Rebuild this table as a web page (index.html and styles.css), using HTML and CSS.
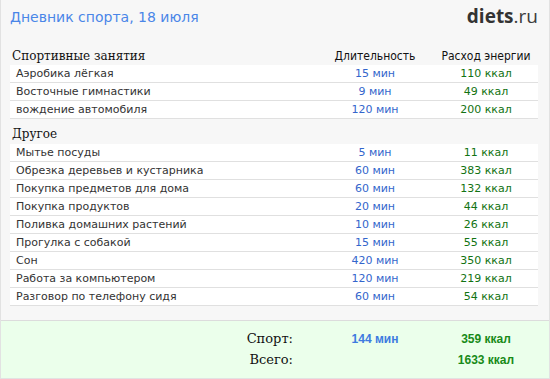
FILE: index.html
```html
<!DOCTYPE html>
<html lang="ru">
<head>
<meta charset="utf-8">
<title>Дневник спорта</title>
<link rel="stylesheet" href="styles.css">
</head>
<body>
<div class="panel">
  <div class="top">
    <div class="title">Дневник спорта, 18 июля</div>
    <div class="logo"><b>diets</b>.ru</div>
  </div>
  <div class="content">
    <div class="grid head">
      <div class="sec">Спортивные занятия</div>
      <div class="colh">Длительность</div>
      <div class="colh">Расход энергии</div>
    </div>
    <div class="grid row"><div class="name">Аэробика лёгкая</div><div class="dur">15 мин</div><div class="kcal">110 ккал</div></div>
    <div class="grid row"><div class="name">Восточные гимнастики</div><div class="dur">9 мин</div><div class="kcal">49 ккал</div></div>
    <div class="grid row"><div class="name">вождение автомобиля</div><div class="dur">120 мин</div><div class="kcal">200 ккал</div></div>

    <div class="grid head other">
      <div class="sec">Другое</div>
    </div>
    <div class="grid row"><div class="name">Мытье посуды</div><div class="dur">5 мин</div><div class="kcal">11 ккал</div></div>
    <div class="grid row"><div class="name">Обрезка деревьев и кустарника</div><div class="dur">60 мин</div><div class="kcal">383 ккал</div></div>
    <div class="grid row"><div class="name">Покупка предметов для дома</div><div class="dur">60 мин</div><div class="kcal">132 ккал</div></div>
    <div class="grid row"><div class="name">Покупка продуктов</div><div class="dur">20 мин</div><div class="kcal">44 ккал</div></div>
    <div class="grid row"><div class="name">Поливка домашних растений</div><div class="dur">10 мин</div><div class="kcal">26 ккал</div></div>
    <div class="grid row"><div class="name">Прогулка с собакой</div><div class="dur">15 мин</div><div class="kcal">55 ккал</div></div>
    <div class="grid row"><div class="name">Сон</div><div class="dur">420 мин</div><div class="kcal">350 ккал</div></div>
    <div class="grid row"><div class="name">Работа за компьютером</div><div class="dur">120 мин</div><div class="kcal">219 ккал</div></div>
    <div class="grid row"><div class="name">Разговор по телефону сидя</div><div class="dur">60 мин</div><div class="kcal">54 ккал</div></div>
  </div>
  <div class="footer">
    <div class="grid total"><div class="label">Спорт:</div><div class="tdur">144 мин</div><div class="tkcal">359 ккал</div></div>
    <div class="grid total"><div class="label">Всего:</div><div class="tdur"></div><div class="tkcal">1633 ккал</div></div>
  </div>
</div>
</body>
</html>
```

FILE: styles.css
```css
html, body {
  margin: 0;
  padding: 0;
  background: #ffffff;
}

.panel {
  width: 550px;
  height: 379px;
  box-sizing: border-box;
  background: #f7f7f7;
  border: 1px solid #e2e2e2;
  border-top: none;
  display: flex;
  flex-direction: column;
}

.top {
  height: 47px;
  display: flex;
  justify-content: space-between;
  align-items: flex-start;
  padding: 5px 11px 0 9px;
  box-sizing: border-box;
}

.title {
  font-family: "DejaVu Sans", Verdana, sans-serif;
  font-size: 14px;
  line-height: 24px;
  color: #4a86e8;
}

.logo {
  font-family: "Open Sans", "Liberation Sans", sans-serif;
  font-size: 19px;
  line-height: 22px;
  color: #3c3c3c;
}

.logo b {
  font-weight: 700;
  color: #333333;
}

.content {
  padding: 0 11px 0 9px;
}

.grid {
  display: grid;
  grid-template-columns: 305px 120px 102px;
}

.head {
  height: 18px;
  align-items: center;
}

.sec {
  font-family: "DejaVu Serif", Georgia, serif;
  font-size: 12px;
  line-height: 16px;
  color: #111111;
  padding-left: 2px;
}

.colh {
  font-family: "DejaVu Sans Condensed", "DejaVu Sans", Tahoma, sans-serif;
  font-size: 12px;
  line-height: 16px;
  color: #111111;
  text-align: center;
}

.other {
  height: 25px;
  align-items: end;
  padding-bottom: 2px;
  box-sizing: border-box;
}

.row {
  height: 18px;
  box-sizing: border-box;
  background: #ffffff;
  border-bottom: 1px solid #e0e0e0;
  font-family: "DejaVu Sans", Verdana, sans-serif;
  font-size: 11px;
  line-height: 17px;
}

.name {
  color: #333333;
  padding-left: 6px;
  white-space: nowrap;
}

.dur {
  color: #3366cc;
  text-align: center;
}

.kcal {
  color: #127312;
  text-align: center;
}

.footer {
  margin-top: auto;
  height: 58px;
  box-sizing: border-box;
  background: #ebffeb;
  border-top: 1px solid #dcdcdc;
  padding: 7px 11px 0 9px;
}

.total {
  height: 21px;
  align-items: center;
}

.label {
  font-family: "DejaVu Serif", Georgia, serif;
  font-size: 13px;
  color: #111111;
  text-align: right;
  padding-right: 22px;
}

.tdur {
  font-family: "Liberation Sans", Arial, sans-serif;
  font-weight: 700;
  font-size: 12px;
  color: #3d7be0;
  text-align: center;
}

.tkcal {
  font-family: "Liberation Sans", Arial, sans-serif;
  font-weight: 700;
  font-size: 12px;
  color: #188a18;
  text-align: center;
}
```
